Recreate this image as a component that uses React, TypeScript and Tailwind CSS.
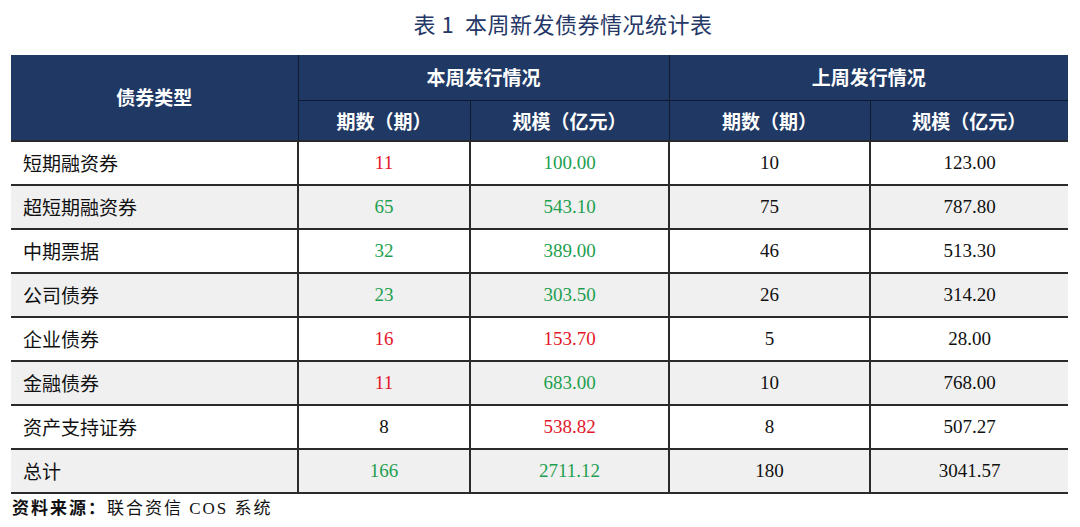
const rows = [
  { name: '短期融资券', n: '11', nc: 'red', s: '100.00', sc: 'green', pn: '10', ps: '123.00' },
  { name: '超短期融资券', n: '65', nc: 'green', s: '543.10', sc: 'green', pn: '75', ps: '787.80' },
  { name: '中期票据', n: '32', nc: 'green', s: '389.00', sc: 'green', pn: '46', ps: '513.30' },
  { name: '公司债券', n: '23', nc: 'green', s: '303.50', sc: 'green', pn: '26', ps: '314.20' },
  { name: '企业债券', n: '16', nc: 'red', s: '153.70', sc: 'red', pn: '5', ps: '28.00' },
  { name: '金融债券', n: '11', nc: 'red', s: '683.00', sc: 'green', pn: '10', ps: '768.00' },
  { name: '资产支持证券', n: '8', nc: 'black', s: '538.82', sc: 'red', pn: '8', ps: '507.27' },
  { name: '总计', n: '166', nc: 'green', s: '2711.12', sc: 'green', pn: '180', ps: '3041.57' },
];

const tone = (c: string) =>
  c === 'red' ? 'text-[#e3162b]' : c === 'green' ? 'text-[#1e9f4f]' : 'text-[#111]';

const sans = "font-['Noto_Sans_CJK_SC',sans-serif]";
const serif = "font-['Liberation_Serif','Noto_Sans_CJK_SC',serif]";

export default function App() {
  return (
    <div className="w-[1080px] h-[527px] bg-white overflow-hidden">
      <h1 className={`${sans} text-center text-[22px] leading-[30px] pt-[8px] pl-[46px] h-[55px] text-[#253766] tracking-[0.5px]`}>
        表 1&nbsp; 本周新发债券情况统计表
      </h1>
      <table className="ml-[11px] w-[1057px] border-collapse table-fixed">
        <colgroup>
          <col className="w-[287px]" />
          <col className="w-[172px]" />
          <col className="w-[199px]" />
          <col className="w-[201px]" />
          <col className="w-[198px]" />
        </colgroup>
        <thead className={`${sans} text-white font-bold text-[19px]`}>
          <tr className="h-[45px] bg-[#1f3864]">
            <th rowSpan={2} className="border-r border-[#0f1a30] text-center font-bold">
              债券类型
            </th>
            <th colSpan={2} className="border-r border-b border-[#0f1a30] font-bold">
              本周发行情况
            </th>
            <th colSpan={2} className="border-b border-[#0f1a30] font-bold">
              上周发行情况
            </th>
          </tr>
          <tr className="h-[41px] bg-[#1f3864]">
            <th className="border-r border-[#0f1a30] font-bold pt-[2px]">期数（期）</th>
            <th className="border-r border-[#0f1a30] font-bold pt-[2px]">规模（亿元）</th>
            <th className="border-r border-[#0f1a30] font-bold pt-[2px]">期数（期）</th>
            <th className="font-bold pt-[2px]">规模（亿元）</th>
          </tr>
        </thead>
        <tbody className="text-[19px]">
          {rows.map((r, i) => (
            <tr
              key={r.name}
              className={`h-[44px] border-t-2 border-[#2a2a2a] ${i === rows.length - 1 ? 'border-b-2' : ''} ${
                i % 2 === 1 ? 'bg-[#f0f0f0]' : 'bg-white'
              }`}
            >
              <td className={`${sans} pl-[12px] text-[#111] border-r-2 border-[#2a2a2a]`}>{r.name}</td>
              <td className={`${serif} text-center border-r-2 border-[#2a2a2a] ${tone(r.nc)}`}>{r.n}</td>
              <td className={`${serif} text-center border-r-2 border-[#2a2a2a] ${tone(r.sc)}`}>{r.s}</td>
              <td className={`${serif} text-center border-r-2 border-[#2a2a2a] text-[#111]`}>{r.pn}</td>
              <td className={`${serif} text-center text-[#111]`}>{r.ps}</td>
            </tr>
          ))}
        </tbody>
      </table>
      <p className={`${serif} ml-[12px] mt-[3px] text-[17px] leading-[24px] text-[#111] font-bold tracking-[2px]`}>
        资料来源：<span className="font-normal">联合资信 COS 系统</span>
      </p>
    </div>
  );
}
